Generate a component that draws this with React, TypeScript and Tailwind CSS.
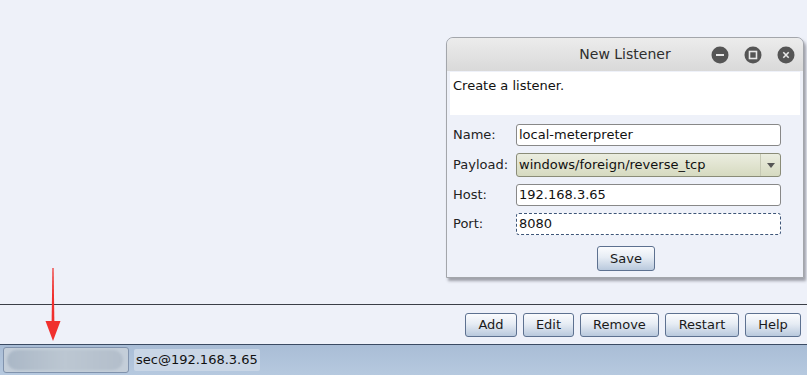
import React from 'react';

const btn =
  'h-[24px] border border-[#5d7190] rounded-[3px] bg-[linear-gradient(#fbfcfe,#e6ecf4_45%,#b9c9dd)] text-[13px] text-[#1a1a1a] flex items-center justify-center';

function WinButton(props: { kind: 'min' | 'max' | 'close' }) {
  const { kind } = props;
  return (
    <svg width="18" height="18" viewBox="0 0 18 18">
      <circle cx="9" cy="9" r="8.5" fill="#555555" />
      {kind === 'min' && <rect x="5" y="8" width="8" height="2" fill="#e8e8e8" />}
      {kind === 'max' && <rect x="5.5" y="5.5" width="7" height="7" fill="none" stroke="#e8e8e8" strokeWidth="1.6" />}
      {kind === 'close' && (
        <path d="M6.3 6.3 L11.7 11.7 M11.7 6.3 L6.3 11.7" stroke="#e8e8e8" strokeWidth="1.6" />
      )}
    </svg>
  );
}

function Field(props: { label: string; value: string; focused?: boolean }) {
  const { label, value, focused } = props;
  return (
    <div className="flex items-center h-[22px]">
      <div className="w-[69px] pl-[6px] text-[13px] text-[#222] whitespace-nowrap">{label}</div>
      <div
        className={
          'w-[265px] h-[22px] rounded-[3px] bg-white flex items-center pl-[2px] text-[13px] text-[#111] ' +
          (focused ? 'border border-dashed border-[#3d5578]' : 'border border-[#888]')
        }
      >
        {value}
      </div>
    </div>
  );
}

export default function App() {
  return (
    <div
      className="relative w-[807px] h-[375px] overflow-hidden flex flex-col bg-[#eef1f9]"
      style={{ fontFamily: '"DejaVu Sans", sans-serif' }}
    >
      <div className="h-[304px]" />
      <div className="h-[1px] bg-[#3b3f47]" />
      <div className="h-[39px] flex items-center justify-end gap-[6px] pr-[6px] pt-[1px]">
        <div className={btn + ' w-[52px]'}>Add</div>
        <div className={btn + ' w-[51px]'}>Edit</div>
        <div className={btn + ' w-[79px]'}>Remove</div>
        <div className={btn + ' w-[74px]'}>Restart</div>
        <div className={btn + ' w-[56px]'}>Help</div>
      </div>
      <div className="h-[1px] bg-[#3b4b63]" />
      <div className="flex-1 flex items-center gap-[5px] pl-[3px] bg-[linear-gradient(#a9bdd6,#b6c9df)]">
        <div className="w-[126px] h-[26px] rounded-[3px] border border-[#8193ad] bg-[#c4ced9] flex items-center overflow-hidden">
          <div className="w-[116px] h-[20px] ml-[3px] rounded-full bg-[linear-gradient(90deg,#aab7c6,#bcc7d2_50%,#b3becb)] blur-[1px]" />
        </div>
        <div className="px-[2px] h-[22px] flex items-center rounded-[2px] bg-[#c9d6e6] text-[13px] text-[#111]">
          sec@192.168.3.65
        </div>
      </div>

      {/* red arrow */}
      <svg className="absolute left-[43px] top-[268px]" width="20" height="74" viewBox="0 0 20 74">
        <path d="M9.4 0 L10.6 0 L11.4 56 L8.6 56 Z" fill="#f0302e" />
        <path d="M2.5 53 L17.5 53 L10 73 Z" fill="#f0302e" />
      </svg>

      {/* New Listener window */}
      <div className="absolute left-[446px] top-[37px] w-[358px] h-[241px] rounded-t-[7px] border border-[#a3a6ab] bg-[#eef1f9] shadow-[2px_3px_3px_rgba(60,60,70,0.45)] flex flex-col">
        <div className="relative h-[33px] rounded-t-[7px] bg-[linear-gradient(#ececec,#d9d9d9)] flex items-center justify-center">
          <div className="text-[14px] text-[#2e2e2e]">New Listener</div>
          <div className="absolute right-[8px] top-[8px] flex gap-[15px]">
            <WinButton kind="min" />
            <WinButton kind="max" />
            <WinButton kind="close" />
          </div>
        </div>
        <div className="mx-[3px] mt-[1px] h-[43px] bg-white pl-[3px] pt-[4px] text-[13px] text-[#111]">
          Create a listener.
        </div>
        <div className="flex flex-col gap-[7px] mt-[9px]">
          <Field label="Name:" value="local-meterpreter" />
          <div className="flex items-center h-[24px]">
            <div className="w-[69px] pl-[6px] text-[13px] text-[#222] whitespace-nowrap">Payload:</div>
            <div className="w-[265px] h-[24px] rounded-[3px] border border-[#8a8c78] bg-[linear-gradient(#ebede0,#d6dac0)] flex items-center">
              <div className="flex-1 pl-[2px] text-[13px] text-[#111]">windows/foreign/reverse_tcp</div>
              <div className="w-[20px] h-[22px] border-l border-[#c6c9b4] flex items-center justify-center">
                <svg width="8" height="5" viewBox="0 0 8 5">
                  <path d="M0 0 L8 0 L4 5 Z" fill="#555" />
                </svg>
              </div>
            </div>
          </div>
          <Field label="Host:" value="192.168.3.65" />
          <Field label="Port:" value="8080" focused />
        </div>
        <div className="flex justify-center mt-[11px] pl-[2px]">
          <div className={btn + ' w-[58px] h-[25px]'}>Save</div>
        </div>
      </div>
    </div>
  );
}
